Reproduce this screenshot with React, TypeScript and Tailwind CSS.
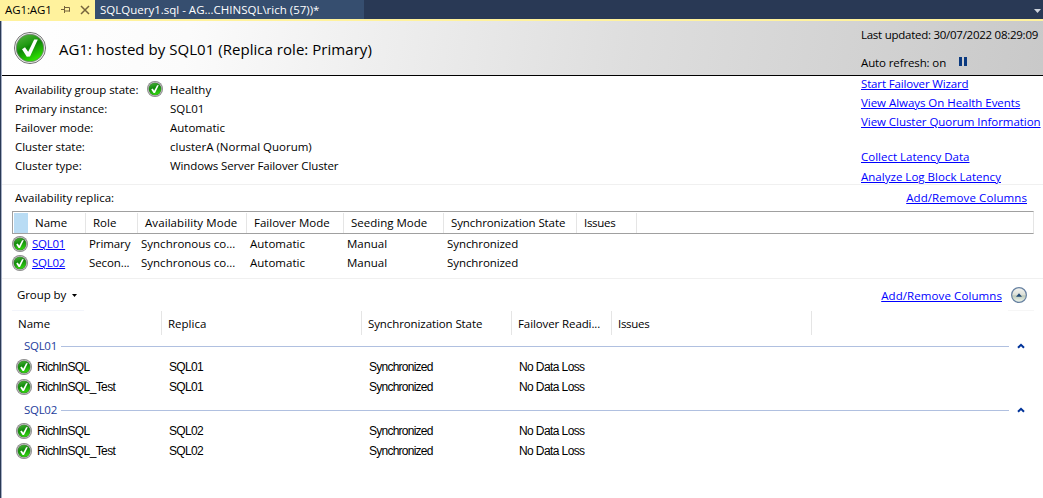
import type { ReactNode } from "react";

function StatusIcon({ size = 16 }: { size?: number }) {
  return (
    <svg width={size} height={size} viewBox="0 0 16 16" className="shrink-0">
      <defs>
        <linearGradient id="ok-green" x1="0" y1="0" x2="0.3" y2="1">
          <stop offset="0" stopColor="#4fb53c" />
          <stop offset="0.5" stopColor="#128a0c" />
          <stop offset="1" stopColor="#2fd00f" />
        </linearGradient>
      </defs>
      <circle cx="8" cy="8" r="8" fill="#858585" />
      <circle cx="8" cy="8" r="7.3" fill="#b8b8b8" />
      <circle cx="8" cy="8" r="6.3" fill="#44763e" />
      <circle cx="8" cy="8" r="6" fill="url(#ok-green)" />
      <path d="M4.2 8.4 5.7 7.6 7.2 9.7 10.1 4.2 11.8 4.2 8 12 6.6 12Z" fill="#fff" />
    </svg>
  );
}

function LargeStatusIcon() {
  return (
    <svg width="34" height="34" viewBox="0 0 34 34" className="shrink-0">
      <defs>
        <linearGradient id="ok-large" x1="0" y1="0" x2="0.5" y2="1">
          <stop offset="0" stopColor="#5cb848" />
          <stop offset="0.45" stopColor="#209a12" />
          <stop offset="0.55" stopColor="#0f8508" />
          <stop offset="1" stopColor="#2ee000" />
        </linearGradient>
      </defs>
      <circle cx="17" cy="17" r="15.6" fill="#f2f2f2" stroke="#777777" strokeWidth="1" />
      <circle cx="17" cy="17" r="13.8" fill="url(#ok-large)" stroke="#777d77" strokeWidth="0.8" />
      <path d="M9 18.2 12 16.2 15.2 20.8 21.2 8.6 24.8 8.4 17 25.5 13.8 25.7Z" fill="#fff" />
    </svg>
  );
}

function Link({ children, className = "" }: { children: ReactNode; className?: string }) {
  return (
    <a href="#" className={`text-[#0000ff] underline underline-offset-1 decoration-1 whitespace-nowrap ${className}`}>
      {children}
    </a>
  );
}

const summary = [
  ["Availability group state:", "Healthy"],
  ["Primary instance:", "SQL01"],
  ["Failover mode:", "Automatic"],
  ["Cluster state:", "clusterA (Normal Quorum)"],
  ["Cluster type:", "Windows Server Failover Cluster"],
];

const replicas = [
  ["SQL01", "Primary"],
  ["SQL02", "Secon..."],
];

function GroupSection({ name }: { name: string }) {
  return (
    <section>
      <div className="flex h-[22px] items-center pl-[22px]">
        <span className="w-[37px] text-[#1e3c9b] tracking-[-0.3px]">{name}</span>
        <div className="h-px w-[948px] bg-[#b0c0e0]" />
        <svg width="8" height="6" viewBox="0 0 8 6" className="ml-[8px]">
          <path d="M1 4.7 4 1.8 7 4.7" fill="none" stroke="#003399" strokeWidth="2" />
        </svg>
      </div>
      <div className="font-['Liberation_Sans',sans-serif] text-[12px]">
        {["RichInSQL", "RichInSQL_Test"].map((db) => (
          <div key={db} className="flex h-5 items-center pl-[14px]">
            <StatusIcon />
            <span className="ml-[5px] w-[132px] tracking-[-0.6px]">{db}</span>
            <span className="w-[200px] tracking-[-0.7px]">{name}</span>
            <span className="w-[150px] tracking-[-0.75px]">Synchronized</span>
            <span className="tracking-[-0.6px]">No Data Loss</span>
          </div>
        ))}
      </div>
      <div className="h-[2px]" />
    </section>
  );
}

export default function App() {
  return (
    <div className="flex h-[498px] w-[1043px] flex-col overflow-hidden bg-white font-['Open_Sans',sans-serif] text-[11.5px] leading-4 whitespace-nowrap text-black">
      <div className="flex h-[19px] shrink-0 items-center bg-[#293955]">
        <div className="flex h-full w-[95px] items-center bg-[#fff29d] pl-[5px]">
          <span className="w-[56px] tracking-[-0.1px]">AG1:AG1</span>
          <svg width="9" height="7" viewBox="0 0 9 7" fill="none" stroke="#75633d">
            <path d="M0 3.5H3M3.5 0V7M3.5 1.5H8.5V5.5M3.5 5H9" />
          </svg>
          <svg width="10" height="10" viewBox="0 0 10 10" className="ml-[10px]" stroke="#75633d" strokeWidth="1.5">
            <path d="M1 1 9 9M9 1 1 9" />
          </svg>
        </div>
        <div className="flex h-full w-[269px] items-center bg-[#364e6f] pt-px pl-[5px] text-white">
          <span>SQLQuery1.sql - AG...CHINSQL\rich (57))*</span>
        </div>
        <svg width="7" height="4" viewBox="0 0 7 4" className="mt-[3px] mr-[2px] ml-auto">
          <path d="M0 0H7L3.5 4Z" fill="#ced4dd" />
        </svg>
      </div>
      <div className="h-[2px] shrink-0 bg-[#fff29d]" />

      <div className="min-h-0 flex-1 border-l border-[#293955]">
        <div className="h-full border-l border-[#a5afc4]">
          <header className="flex h-[55px] border-b border-black bg-[linear-gradient(100deg,#ffffff_0%,#fbfbfb_18%,#dedede_60%,#c9c9c9_100%)]">
            <div className="flex items-center pl-[11px]">
              <LargeStatusIcon />
              <h1 className="mt-[2px] ml-[12px] text-[15px] tracking-[0.04px]">AG1: hosted by SQL01 (Replica role: Primary)</h1>
            </div>
            <div className="ml-auto w-[182px] pt-[6px]">
              <div className="tracking-[-0.26px]">Last updated: 30/07/2022 08:29:09</div>
              <div className="mt-3 flex items-center">
                <span className="w-[98px] tracking-[-0.12px]">Auto refresh: on</span>
                <svg width="8" height="9" viewBox="0 0 8 9" className="mb-[3px]">
                  <path d="M0 0H3V9H0ZM5 0H8V9H5Z" fill="#0b3a80" />
                </svg>
              </div>
            </div>
          </header>

          <section className="flex h-[109px] border-b border-[#f0f0f0]">
            <div className="pt-[4px] pl-[13px]">
              {summary.map(([label, value], i) => (
                <div key={label} className="flex h-[19.2px] items-center">
                  <span className="w-[132px] tracking-[-0.05px]">{label}</span>
                  <span className="-mt-[2px] flex w-[23px]">{i === 0 && <StatusIcon />}</span>
                  <span className={i === 4 ? "tracking-[-0.12px]" : ""}>{value}</span>
                </div>
              ))}
            </div>
            <nav className="ml-auto flex w-[182px] flex-col">
              <Link className="tracking-[-0.15px]">Start Failover Wizard</Link>
              <Link className="mt-[3px] tracking-[-0.04px]">View Always On Health Events</Link>
              <Link className="mt-[3px] tracking-[-0.05px]">View Cluster Quorum Information</Link>
              <Link className="mt-[19px]">Collect Latency Data</Link>
              <Link className="mt-[4px] tracking-[0.02px]">Analyze Log Block Latency</Link>
            </nav>
          </section>

          <section className="h-[94px] border-b border-[#f0f0f0] pl-[10px]">
            <div className="flex h-[26px] items-center pr-4 pl-[3px]">
              <span>Availability replica:</span>
              <Link className="ml-auto tracking-[0.09px]">Add/Remove Columns</Link>
            </div>
            <div className="flex h-[23px] w-[1022px] items-stretch border border-[#a0a0a0] border-r-[#e5e5e5] pt-px leading-5">
              <div className="ml-px w-[14px] bg-[#b9dcf4]" />
              <div className="w-[58px] border-r border-[#e5e5e5] pl-[7px]">Name</div>
              <div className="w-[52px] border-r border-[#e5e5e5] pl-[7px]">Role</div>
              <div className="w-[109px] border-r border-[#e5e5e5] pl-[7px] tracking-[0.08px]">Availability Mode</div>
              <div className="w-[97px] border-r border-[#e5e5e5] pl-[7px]">Failover Mode</div>
              <div className="w-[100px] border-r border-[#e5e5e5] pl-[7px]">Seeding Mode</div>
              <div className="w-[133px] border-r border-[#e5e5e5] pl-[7px] tracking-[-0.1px]">Synchronization State</div>
              <div className="w-[60px] border-r border-[#e5e5e5] pl-[7px] tracking-[-0.3px]">Issues</div>
            </div>
            {replicas.map(([name, role]) => (
              <div key={name} className="flex h-[19px] items-center">
                <StatusIcon />
                <Link className="ml-1 w-[57px] tracking-[-0.25px]">{name}</Link>
                <span className="w-[52px] tracking-[-0.1px]">{role}</span>
                <span className="w-[109px]">Synchronous co...</span>
                <span className="w-[97px]">Automatic</span>
                <span className="w-[100px]">Manual</span>
                <span className="tracking-[-0.08px]">Synchronized</span>
              </div>
            ))}
          </section>

          <section>
            <div className="flex h-[32px] justify-between pr-[9px] pl-[10px]">
              <div className="flex w-[72px] items-center border-b border-[#f3f5fb] pl-[5px]">
                <span className="w-[55px] tracking-[-0.1px]">Group by</span>
                <svg width="5" height="3" viewBox="0 0 5 3" className="mt-[2px]">
                  <path d="M0 0H5L2.5 3Z" fill="#000" />
                </svg>
              </div>
              <div className="flex items-center">
                <Link className="mt-px mr-[6px] tracking-[0.09px]">Add/Remove Columns</Link>
                <div className="flex h-full w-[26px] items-center border-b border-[#f6f6f6] pl-[3px]">
                  <svg width="16" height="16" viewBox="0 0 16 16">
                    <defs>
                      <linearGradient id="collapse" x1="0" y1="0" x2="0" y2="1">
                        <stop offset="0" stopColor="#f4f5f2" />
                        <stop offset="0.5" stopColor="#dcdfd6" />
                        <stop offset="0.55" stopColor="#bcc8b8" />
                        <stop offset="1" stopColor="#f3faf0" />
                      </linearGradient>
                    </defs>
                    <circle cx="8" cy="8" r="7.4" fill="url(#collapse)" stroke="#6680a0" strokeWidth="1.2" />
                    <path d="M5 9.7 8 6.2 11 9.7Z" fill="#1d4673" />
                  </svg>
                </div>
              </div>
            </div>
            <div className="flex h-[24px] leading-[25px]">
              <div className="w-[160px] border-r border-[#e5e5e5] pl-[16px]">Name</div>
              <div className="w-[200px] border-r border-[#e5e5e5] pl-[6px]">Replica</div>
              <div className="w-[150px] border-r border-[#e5e5e5] pl-[6px] tracking-[-0.1px]">Synchronization State</div>
              <div className="w-[100px] border-r border-[#e5e5e5] pl-[6px] tracking-[-0.1px]">Failover Readi...</div>
              <div className="w-[200px] border-r border-[#e5e5e5] pl-[6px] tracking-[-0.3px]">Issues</div>
            </div>
            <GroupSection name="SQL01" />
            <GroupSection name="SQL02" />
          </section>
        </div>
      </div>
    </div>
  );
}
